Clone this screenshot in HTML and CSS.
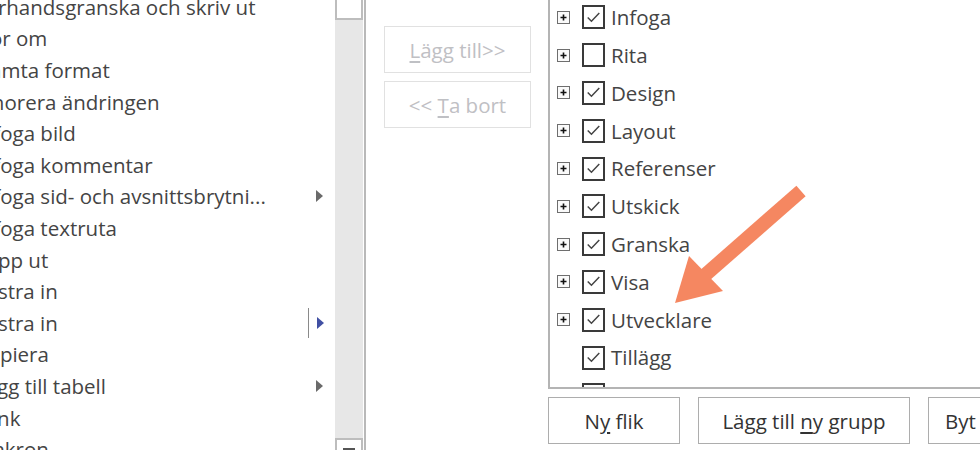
FILE: index.html
```html
<!DOCTYPE html>
<html lang="sv">
<head>
<meta charset="utf-8">
<title>Anpassa menyfliksområdet</title>
<link rel="stylesheet" href="styles.css">
</head>
<body>
<div class="page">
  <section class="cmd-panel">
    <ul class="cmd-list">
      <li class="cmd"><span class="cmd-label">Förhandsgranska och skriv ut</span></li>
      <li class="cmd"><span class="cmd-label">Gör om</span></li>
      <li class="cmd"><span class="cmd-label">Hämta format</span></li>
      <li class="cmd"><span class="cmd-label">Ignorera ändringen</span></li>
      <li class="cmd"><span class="cmd-label">Infoga bild</span></li>
      <li class="cmd"><span class="cmd-label">Infoga kommentar</span></li>
      <li class="cmd"><span class="cmd-label">Infoga sid- och avsnittsbrytni...</span><span class="sub"><span class="sub-arrow"></span></span></li>
      <li class="cmd"><span class="cmd-label">Infoga textruta</span></li>
      <li class="cmd"><span class="cmd-label">Klipp ut</span></li>
      <li class="cmd"><span class="cmd-label">Klistra in</span></li>
      <li class="cmd"><span class="cmd-label">Klistra in</span><span class="sub sub-split"><span class="sub-arrow sub-arrow-active"></span></span></li>
      <li class="cmd"><span class="cmd-label">Kopiera</span></li>
      <li class="cmd"><span class="cmd-label">Lägg till tabell</span><span class="sub"><span class="sub-arrow"></span></span></li>
      <li class="cmd"><span class="cmd-label">Länk</span></li>
      <li class="cmd"><span class="cmd-label">Makron</span></li>
    </ul>
    <div class="scrollbar">
      <div class="sb-btn sb-up"></div>
      <div class="sb-track"></div>
      <div class="sb-btn sb-down"><span class="sb-glyph"></span></div>
    </div>
    <div class="panel-gap"></div>
  </section>

  <section class="mid">
    <button class="move-btn" disabled><u>L</u>ägg till&gt;&gt;</button>
    <button class="move-btn" disabled>&lt;&lt; <u>T</u>a bort</button>
  </section>

  <section class="tabs-panel">
    <div class="tree-box">
      <ul class="tree">
        <li class="tree-row"><span class="expander"><svg viewBox="0 0 11 11"><path d="M2.5 5.5h6M5.5 2.5v6"/></svg></span><span class="check on"><svg viewBox="0 0 23 23"><path d="M4.5 11.5l4.5 4.5 9.5-10"/></svg></span><span class="tree-label">Infoga</span></li>
        <li class="tree-row"><span class="expander"><svg viewBox="0 0 11 11"><path d="M2.5 5.5h6M5.5 2.5v6"/></svg></span><span class="check"></span><span class="tree-label">Rita</span></li>
        <li class="tree-row"><span class="expander"><svg viewBox="0 0 11 11"><path d="M2.5 5.5h6M5.5 2.5v6"/></svg></span><span class="check on"><svg viewBox="0 0 23 23"><path d="M4.5 11.5l4.5 4.5 9.5-10"/></svg></span><span class="tree-label">Design</span></li>
        <li class="tree-row"><span class="expander"><svg viewBox="0 0 11 11"><path d="M2.5 5.5h6M5.5 2.5v6"/></svg></span><span class="check on"><svg viewBox="0 0 23 23"><path d="M4.5 11.5l4.5 4.5 9.5-10"/></svg></span><span class="tree-label">Layout</span></li>
        <li class="tree-row"><span class="expander"><svg viewBox="0 0 11 11"><path d="M2.5 5.5h6M5.5 2.5v6"/></svg></span><span class="check on"><svg viewBox="0 0 23 23"><path d="M4.5 11.5l4.5 4.5 9.5-10"/></svg></span><span class="tree-label">Referenser</span></li>
        <li class="tree-row"><span class="expander"><svg viewBox="0 0 11 11"><path d="M2.5 5.5h6M5.5 2.5v6"/></svg></span><span class="check on"><svg viewBox="0 0 23 23"><path d="M4.5 11.5l4.5 4.5 9.5-10"/></svg></span><span class="tree-label">Utskick</span></li>
        <li class="tree-row"><span class="expander"><svg viewBox="0 0 11 11"><path d="M2.5 5.5h6M5.5 2.5v6"/></svg></span><span class="check on"><svg viewBox="0 0 23 23"><path d="M4.5 11.5l4.5 4.5 9.5-10"/></svg></span><span class="tree-label">Granska</span></li>
        <li class="tree-row"><span class="expander"><svg viewBox="0 0 11 11"><path d="M2.5 5.5h6M5.5 2.5v6"/></svg></span><span class="check on"><svg viewBox="0 0 23 23"><path d="M4.5 11.5l4.5 4.5 9.5-10"/></svg></span><span class="tree-label">Visa</span></li>
        <li class="tree-row"><span class="expander"><svg viewBox="0 0 11 11"><path d="M2.5 5.5h6M5.5 2.5v6"/></svg></span><span class="check on"><svg viewBox="0 0 23 23"><path d="M4.5 11.5l4.5 4.5 9.5-10"/></svg></span><span class="tree-label">Utvecklare</span></li>
        <li class="tree-row"><span class="expander expander-none"></span><span class="check on"><svg viewBox="0 0 23 23"><path d="M4.5 11.5l4.5 4.5 9.5-10"/></svg></span><span class="tree-label">Tillägg</span></li>
        <li class="tree-row"><span class="expander"><svg viewBox="0 0 11 11"><path d="M2.5 5.5h6M5.5 2.5v6"/></svg></span><span class="check"></span><span class="tree-label">Hjälp</span></li>
      </ul>
    </div>
    <div class="tree-actions">
      <button class="act-btn act-new">N<u>y</u> flik</button>
      <button class="act-btn act-group">Lägg till <u>n</u>y grupp</button>
      <button class="act-btn act-rename">Byt namn...</button>
    </div>
  </section>

  <svg class="callout" viewBox="0 0 980 450" aria-hidden="true">
    <line x1="801" y1="191" x2="704" y2="276" class="callout-shaft"/>
    <polygon points="675,303 689,256 723,291" class="callout-head"/>
  </svg>
</div>
</body>
</html>
```

FILE: styles.css
```css
html, body {
  margin: 0;
  padding: 0;
  background: #ffffff;
}

body {
  font-family: "Open Sans", "Noto Sans", "Liberation Sans", sans-serif;
  font-size: 20.5px;
  color: #444444;
  overflow: hidden;
}

.page {
  position: relative;
  width: 980px;
  height: 450px;
  display: flex;
  overflow: hidden;
}

/* ---------- left command list ---------- */
.cmd-panel {
  display: flex;
  width: 366px;
  height: 450px;
  flex: none;
  border-right: 2px solid #b9b9b9;
  box-sizing: border-box;
}

.cmd-list {
  list-style: none;
  margin: -9px 0 0 0;
  padding: 0;
  width: 335px;
  flex: none;
  overflow: hidden;
}

.cmd {
  display: flex;
  align-items: center;
  height: 31.6px;
  white-space: nowrap;
}

.cmd-label {
  flex: 1;
  margin-left: -25px;
  overflow: hidden;
}

.sub {
  width: 27px;
  height: 30px;
  flex: none;
  display: flex;
  align-items: center;
  padding-left: 8px;
  box-sizing: border-box;
}

.sub-split {
  border-left: 1px solid #8a8a8a;
}

.sub-arrow {
  width: 0;
  height: 0;
  border-left: 7px solid #6a6a6a;
  border-top: 6.5px solid transparent;
  border-bottom: 6.5px solid transparent;
}

.sub-arrow-active {
  border-left-color: #4150a3;
  border-top-width: 6px;
  border-bottom-width: 6px;
}

.scrollbar {
  width: 28px;
  flex: none;
  display: flex;
  flex-direction: column;
  background: #e7e7e7;
}

.sb-btn {
  height: 22px;
  flex: none;
  background: #ffffff;
  border: 2px solid #bdbdbd;
  box-sizing: border-box;
  display: flex;
  justify-content: center;
  padding-top: 8px;
}

.sb-up {
  margin-top: -2px;
}

.sb-track {
  flex: 1;
}

.sb-down {
  height: 14px;
  margin-bottom: -2px;
}

.sb-glyph {
  width: 12px;
  height: 2px;
  background: #555555;
}

.panel-gap {
  flex: 1;
}

/* ---------- middle buttons ---------- */
.mid {
  width: 182px;
  flex: none;
  display: flex;
  flex-direction: column;
  gap: 8px;
  padding: 26px 0 0 18px;
  box-sizing: border-box;
}

.move-btn {
  width: 147px;
  height: 47px;
  font: inherit;
  font-size: 20.5px;
  color: #bfc0c4;
  background: #ffffff;
  border: 1px solid #e1e1e1;
  padding: 0;
}

.move-btn u {
  text-underline-offset: 3px;
}

/* ---------- right tabs tree ---------- */
.tabs-panel {
  flex: 1;
  display: flex;
  flex-direction: column;
  gap: 8px;
}

.tree-box {
  height: 389px;
  border-left: 2px solid #b4b4b4;
  border-bottom: 2px solid #b4b4b4;
  box-sizing: border-box;
  overflow: hidden;
}

.tree {
  list-style: none;
  margin: -1.5px 0 0 0;
  padding: 0 0 0 7px;
}

.tree-row {
  display: flex;
  align-items: center;
  height: 37.8px;
  white-space: nowrap;
}

.expander {
  width: 13px;
  height: 13px;
  flex: none;
  box-sizing: border-box;
  border: 1px solid #6e6e6e;
  background: #fafafa;
  display: flex;
  margin-right: 12px;
}

.expander svg {
  width: 11px;
  height: 11px;
}

.expander path {
  stroke: #111111;
  stroke-width: 1.6;
  fill: none;
}

.expander-none {
  border: none;
  background: none;
}

.check {
  width: 23px;
  height: 24px;
  flex: none;
  box-sizing: border-box;
  border: 2px solid #3a3a3a;
  background: #ffffff;
  margin-right: 6px;
  display: flex;
  align-items: center;
  justify-content: center;
}

.check svg {
  width: 21px;
  height: 21px;
}

.check path {
  stroke: #444444;
  stroke-width: 1.8;
  fill: none;
}

.tree-label {
  line-height: 1;
}

.tree-actions {
  display: flex;
  gap: 18px;
}

.act-btn {
  height: 47px;
  flex: none;
  font: inherit;
  font-size: 20.5px;
  color: #333333;
  background: #ffffff;
  border: 1px solid #adadad;
  padding: 0;
}

.act-btn u {
  text-underline-offset: 3px;
}

.act-new { width: 132px; }
.act-group { width: 212px; }
.act-rename { width: 140px; text-align: left; padding-left: 16px; }

/* ---------- callout arrow ---------- */
.callout {
  position: absolute;
  left: 0;
  top: 0;
  width: 980px;
  height: 450px;
  pointer-events: none;
}

.callout-shaft {
  stroke: #f58761;
  stroke-width: 14;
  stroke-linecap: butt;
}

.callout-head {
  fill: #f58761;
}
```
